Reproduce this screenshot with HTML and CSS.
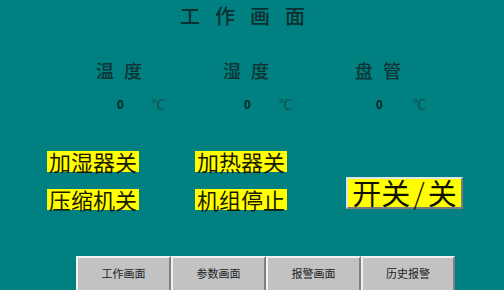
FILE: index.html
```html
<!DOCTYPE html>
<html lang="zh-CN">
<head>
<meta charset="utf-8">
<title>工作画面</title>
<link rel="stylesheet" href="styles.css">
</head>
<body>
<div class="screen">
  <h1 class="title">工作画面</h1>

  <div class="sensors">
    <div class="sensor">
      <div class="sensor-label">温度</div>
      <div class="sensor-value"><span class="num">0</span><span class="unit">℃</span></div>
    </div>
    <div class="sensor">
      <div class="sensor-label">湿度</div>
      <div class="sensor-value"><span class="num">0</span><span class="unit">℃</span></div>
    </div>
    <div class="sensor">
      <div class="sensor-label">盘管</div>
      <div class="sensor-value wide"><span class="num">0</span><span class="unit">℃</span></div>
    </div>
  </div>

  <div class="controls">
    <div class="status-grid">
      <span class="status">加湿器关</span>
      <span class="status">加热器关</span>
      <span class="status">压缩机关</span>
      <span class="status">机组停止</span>
    </div>
    <div class="power-btn">开关<span class="slash">/</span>关</div>
  </div>

  <nav class="nav">
    <div class="nav-btn">工作画面</div>
    <div class="nav-btn">参数画面</div>
    <div class="nav-btn">报警画面</div>
    <div class="nav-btn last">历史报警</div>
  </nav>
</div>
</body>
</html>
```

FILE: styles.css
```css
html, body {
  margin: 0;
  padding: 0;
}

body {
  background: #008080;
  font-family: "Noto Sans CJK SC", "Noto Sans", sans-serif;
}

.screen {
  width: 504px;
  height: 290px;
  overflow: hidden;
  background: #008080;
}

.title {
  margin: 0;
  padding: 6px 0 0 180px;
  font-size: 20px;
  line-height: 20px;
  font-weight: 500;
  letter-spacing: 15px;
  color: #0a3030;
}

.sensors {
  display: grid;
  grid-template-columns: 127px 132px 1fr;
  margin-top: 35px;
  padding-left: 96px;
}

.sensor-label {
  font-size: 18px;
  line-height: 18px;
  font-weight: 500;
  letter-spacing: 10px;
  color: #0f3535;
}

.sensor-value {
  margin-top: 19px;
  padding-left: 21px;
  display: flex;
  align-items: baseline;
  line-height: 12px;
}

.num {
  width: 35px;
  font-family: "Liberation Sans", sans-serif;
  font-weight: bold;
  font-size: 12px;
  color: #082828;
}

.sensor-value.wide .num {
  width: 37px;
}

.unit {
  font-family: "Noto Sans CJK SC", sans-serif;
  font-size: 13px;
  color: #174c4c;
}

.controls {
  display: flex;
  margin-top: 40px;
  padding-left: 47px;
}

.status-grid {
  display: grid;
  grid-template-columns: 148px 92px;
  row-gap: 17px;
}

.status {
  justify-self: start;
  background: #ffff00;
  color: #1a1a00;
  font-size: 22px;
  line-height: 21px;
  padding: 0 2px;
}

.power-btn {
  align-self: flex-end;
  margin: 0 0 1px 59px;
  box-sizing: border-box;
  width: 117px;
  height: 32px;
  background: #ffff00;
  border: 2px solid;
  border-color: #dce4ec #7c7c7c #7c7c7c #dce4ec;
  color: #111100;
  font-size: 29px;
  line-height: 27px;
  text-align: center;
}

.slash {
  padding: 0 3px;
  font-weight: 300;
}

.nav {
  display: flex;
  margin-top: 46px;
  padding-left: 76px;
}

.nav-btn {
  box-sizing: border-box;
  width: 95px;
  height: 36px;
  background: #c2c2c2;
  border: 2px solid;
  border-color: #eef2f2 #808080 #808080 #eef2f2;
  color: #1e1e1e;
  font-size: 11px;
  line-height: 31px;
  text-align: center;
}

.nav-btn.last {
  width: 94px;
}
```
